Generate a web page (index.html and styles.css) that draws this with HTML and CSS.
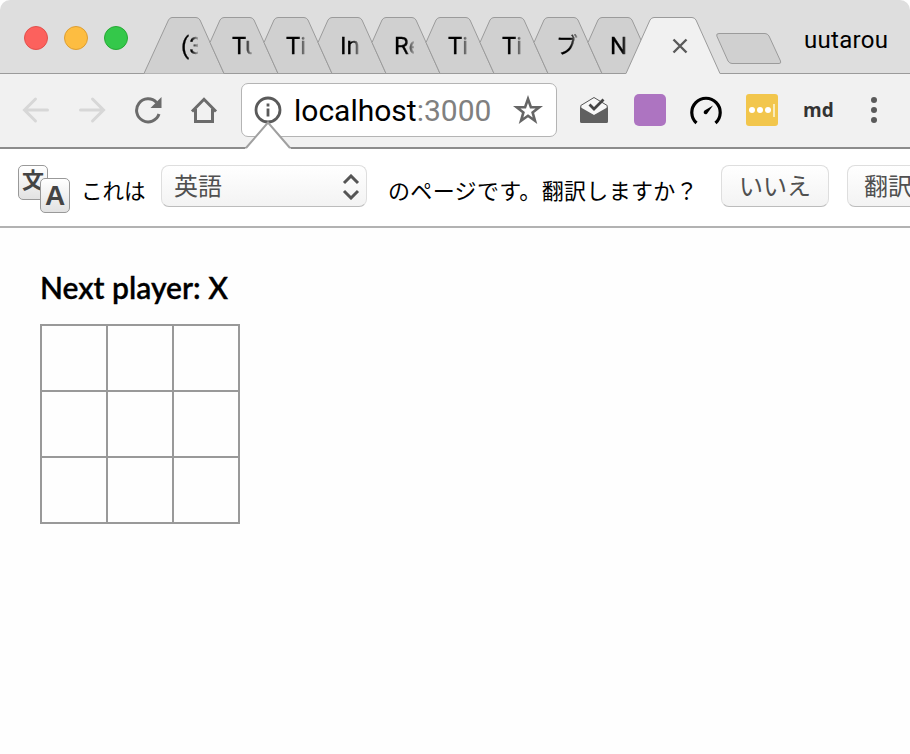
FILE: index.html
```html
<!DOCTYPE html>
<html lang="ja">
<head>
  <meta charset="utf-8">
  <title>localhost:3000</title>
  <link rel="stylesheet" href="styles.css">
</head>
<body>
<div class="window">
  <div class="tab-strip">
    <div class="lights">
      <span class="light red"></span>
      <span class="light yellow"></span>
      <span class="light green"></span>
    </div>
    <div class="tabs">
      <div class="tab first">
        <svg class="shape" width="82" height="58"><path d="M0 57.5 24.5 4Q26 1.5 28 1.5H52Q54.500 1.500 56 4L80 57.500"/></svg>
        <span class="title">(3)</span>
      </div>
      <div class="tab">
        <svg class="shape" width="82" height="58"><path d="M12 26.500 22 4Q23.500 1.500 26 1.500H52Q54.500 1.500 56 4L80 57.500H26Z"/></svg>
        <span class="title">Tu</span>
      </div>
      <div class="tab">
        <svg class="shape" width="82" height="58"><path d="M12 26.500 22 4Q23.500 1.500 26 1.500H52Q54.500 1.500 56 4L80 57.500H26Z"/></svg>
        <span class="title">Ti</span>
      </div>
      <div class="tab">
        <svg class="shape" width="82" height="58"><path d="M12 26.500 22 4Q23.500 1.500 26 1.500H52Q54.500 1.500 56 4L80 57.500H26Z"/></svg>
        <span class="title">In</span>
      </div>
      <div class="tab">
        <svg class="shape" width="82" height="58"><path d="M12 26.500 22 4Q23.500 1.500 26 1.500H52Q54.500 1.500 56 4L80 57.500H26Z"/></svg>
        <span class="title">Re</span>
      </div>
      <div class="tab">
        <svg class="shape" width="82" height="58"><path d="M12 26.500 22 4Q23.500 1.500 26 1.500H52Q54.500 1.500 56 4L80 57.500H26Z"/></svg>
        <span class="title">Ti</span>
      </div>
      <div class="tab">
        <svg class="shape" width="82" height="58"><path d="M12 26.500 22 4Q23.500 1.500 26 1.500H52Q54.500 1.500 56 4L80 57.500H26Z"/></svg>
        <span class="title">Ti</span>
      </div>
      <div class="tab">
        <svg class="shape" width="82" height="58"><path d="M12 26.500 22 4Q23.500 1.500 26 1.500H52Q54.500 1.500 56 4L80 57.500H26Z"/></svg>
        <span class="title wide">ブ</span>
      </div>
      <div class="tab">
        <svg class="shape" width="82" height="58"><path d="M12 26.500 22 4Q23.500 1.500 26 1.500H52Q54.500 1.500 56 4L80 57.500H26Z"/></svg>
        <span class="title">N</span>
      </div>
      <div class="tab active">
        <svg class="shape" width="98" height="58"><path d="M0 58 1 57.500 25 4Q26.500 1.500 29 1.500H67Q69.500 1.500 71 4L95 57.500 96 58"/></svg>
        <svg class="close" width="16" height="16"><path d="M1.500 1.500 14.500 14.500M14.500 1.500 1.500 14.500"/></svg>
      </div>
    </div>
    <svg class="new-tab" width="66" height="32"><path d="M3 .5H49Q51.500 .5 53 3L64.500 28Q65.500 30.500 63 30.500H16Q13.500 30.500 12 28L.8 3Q0 .5 3 .5Z"/></svg>
    <span class="user">uutarou</span>
  </div>

  <div class="toolbar">
    <div class="nav">
      <svg class="nav-icon off" width="28" height="28"><path d="M25.500 14H3.500M13.500 3 2.500 14 13.500 25"/></svg>
      <svg class="nav-icon off" width="28" height="28"><path d="M2.500 14H24.500M14.500 3 25.500 14 14.500 25"/></svg>
      <svg class="nav-icon" width="28" height="28"><path d="M22.500 6.500A11.500 11.500 0 1 0 25 18"/><path class="solid" d="M27.500 1V12H16.500Z"/></svg>
      <svg class="nav-icon" width="28" height="28"><path d="M2 15.500 14 3.300 26 15.500"/><path d="M5.500 13V25.500H22.500V13"/></svg>
    </div>
    <div class="omnibox">
      <svg class="info" width="28" height="28"><circle cx="14" cy="14" r="12"/><path d="M14 7.500v3M14 12.500v8"/></svg>
      <span class="url">localhost<span class="port">:3000</span></span>
      <svg class="star" width="30" height="30"><path d="M15 4 17.900 12.200H26.300L19.600 17.400 22 25.800 15 20.800 8 25.800 10.400 17.400 3.700 12.200H12.100Z"/></svg>
    </div>
    <div class="extensions">
      <svg width="28" height="28"><path d="M.8 9.500 14 1.500 27.200 9.500V13L14 20 .8 13Z" fill="#f7f7f7" stroke="#555"/><path d="M0 11 14 19 28 11V25.500Q28 27 26.500 27H1.500Q0 27 0 25.500Z" fill="#606060"/><path d="M9.500 8.500 14 13 23.500 3.500" fill="none" stroke="#444" stroke-width="2.800"/></svg>
      <span class="purple"></span>
      <svg width="32" height="30"><path d="M6.500 28A14.200 14.200 0 1 1 25.500 28" fill="none" stroke="#000" stroke-width="3.200"/><path d="M23 10.500 17 18.700Q15.500 20 14 18.500 13 17 14.500 15.500Z"/></svg>
      <span class="password"><i></i><i></i><i></i><b></b></span>
      <span class="md">md</span>
      <span class="menu"><i></i><i></i><i></i></span>
    </div>
  </div>

  <div class="infobar">
    <svg class="arrow" width="46" height="29"><path d="M0 28 23 1 46 28V29H0Z" fill="#fff"/><path d="M1 27 23 1.500 45 27" fill="none" stroke="#a0a0a0" stroke-width="2"/></svg>
    <div class="translate">
      <span class="card">文</span>
      <span class="card front">A</span>
    </div>
    <span class="label">これは</span>
    <div class="button select">英語<svg width="18" height="26"><path d="M2 9 9 2 16 9M2 17 9 24 16 17"/></svg></div>
    <span class="label question">のページです。翻訳しますか？</span>
    <div class="button no">いいえ</div>
    <div class="button yes">翻訳</div>
  </div>

  <div class="game">
    <div class="status">Next player: X</div>
    <div class="board">
      <div class="square"></div><div class="square"></div><div class="square"></div>
      <div class="square"></div><div class="square"></div><div class="square"></div>
      <div class="square"></div><div class="square"></div><div class="square"></div>
    </div>
  </div>
</div>
</body>
</html>
```
FILE: styles.css
```css
* {
  box-sizing: border-box;
}
body {
  margin: 0;
  background: #fff;
  font-family: Roboto, "Noto Sans CJK JP", sans-serif;
  overflow: hidden;
}
svg {
  display: block;
  flex: none;
}
.window {
  width: 910px;
  height: 754px;
  background: #fefefe;
  overflow: hidden;
}

/* tabs */
.tab-strip {
  display: flex;
  height: 74px;
  background: #dedede;
  border-bottom: 1px solid #9b9b9b;
  border-radius: 10px 10px 0 0;
}
.lights {
  display: flex;
  gap: 16px;
  width: 144px;
  padding: 26px 0 0 24px;
}
.light {
  width: 24px;
  height: 24px;
  border-radius: 50%;
  border: 1px solid;
}
.red {
  background: #fc615d;
  border-color: #e2504c;
}
.yellow {
  background: #fdbd41;
  border-color: #dd9e33;
}
.green {
  background: #34c84a;
  border-color: #26a934;
}
.tabs {
  display: flex;
  padding-top: 16px;
}
.tab {
  position: relative;
  width: 54px;
  height: 58px;
}
.shape {
  position: absolute;
  left: 0;
  top: 0;
  fill: #d0d0d0;
  stroke: #9b9b9b;
}
.title {
  position: relative;
  display: block;
  margin-left: 34px;
  width: 20px;
  overflow: hidden;
  white-space: nowrap;
  font-size: 24px;
  line-height: 60px;
  height: 58px;
  -webkit-text-stroke: .3px;
  -webkit-mask-image: linear-gradient(90deg, #000 60%, rgba(0, 0, 0, .2));
  mask-image: linear-gradient(90deg, #000 60%, rgba(0, 0, 0, .2));
}
.first .title {
  margin-left: 37px;
  width: 17px;
}
.title.wide {
  width: 23px;
  font-size: 22px;
}
.active {
  width: 87px;
  margin-left: -5px;
}
.active .shape {
  width: 99px;
  fill: #f1f1f1;
}
.close {
  position: relative;
  margin: 22px 0 0 47px;
  fill: none;
  stroke: #5a5a5a;
  stroke-width: 2.4;
}
.new-tab {
  margin: 33px 0 0 4px;
  fill: #d0d0d0;
  stroke: #9b9b9b;
}
.user {
  margin: 25px 0 0 22px;
  font-size: 24px;
  line-height: 30px;
  letter-spacing: .3px;
}

/* toolbar */
.toolbar {
  display: flex;
  height: 75px;
  background: #f1f1f1;
  border-bottom: 2px solid #8c8c8c;
}
.nav {
  display: flex;
  gap: 28px;
  width: 241px;
  padding: 22px 0 0 22px;
}
.nav-icon {
  fill: none;
  stroke: #6b6b6b;
  stroke-width: 3;
}
.nav-icon.off {
  stroke: #d7d7d7;
  stroke-linecap: round;
}
.solid {
  fill: #6b6b6b;
  stroke: none;
}
.omnibox {
  display: flex;
  align-items: center;
  width: 316px;
  height: 54px;
  margin-top: 9px;
  padding-left: 12px;
  background: #fff;
  border: 1px solid #b4b4b4;
  border-radius: 7px;
}
.info {
  fill: none;
  stroke: #5a5a5a;
  stroke-width: 2.8;
}
.url {
  width: 231px;
  padding-left: 12px;
  font-size: 30px;
  white-space: nowrap;
}
.port {
  color: #808080;
}
.star {
  fill: none;
  stroke: #666;
  stroke-width: 2.6;
}
.extensions {
  display: flex;
  align-items: center;
  height: 72px;
  padding-left: 23px;
}
.purple {
  width: 32px;
  height: 32px;
  margin: 0 24px 0 26px;
  border-radius: 5px;
  background: #ad74c1;
}
.password {
  display: flex;
  align-items: center;
  gap: 2px;
  width: 32px;
  height: 32px;
  margin-left: 24px;
  padding-left: 3px;
  border-radius: 3px;
  background: #f2c64c;
}
.password i {
  width: 6px;
  height: 6px;
  border-radius: 50%;
  background: #fff;
}
.password b {
  width: 2px;
  height: 13px;
  background: #faebb8;
}
.md {
  width: 66px;
  padding-left: 25px;
  font: bold 19px "Open Sans", sans-serif;
  color: #333;
}
.menu {
  display: flex;
  flex-direction: column;
  gap: 4px;
  margin-left: 27px;
}
.menu i {
  width: 6px;
  height: 6px;
  border-radius: 50%;
  background: #5a5a5a;
}

/* translate bar */
.infobar {
  position: relative;
  display: flex;
  height: 79px;
  padding-left: 18px;
  background: #fff;
  border-bottom: 2px solid #b2b2b2;
}
.arrow {
  position: absolute;
  left: 245px;
  top: -28px;
}
.translate {
  position: relative;
  flex: none;
  width: 63px;
  padding-top: 16px;
}
.card {
  display: block;
  width: 30px;
  height: 35px;
  border: 1.5px solid #999;
  border-radius: 5px;
  background: linear-gradient(#fff, #e2e2e2);
  color: #444;
  font-size: 22px;
  font-weight: bold;
  line-height: 30px;
  text-align: center;
}
.card.front {
  position: absolute;
  left: 22px;
  top: 29px;
  font: bold 28px/34px "Liberation Sans", sans-serif;
}
.label {
  flex: none;
  width: 80px;
  font-size: 21.5px;
  line-height: 32px;
  padding-top: 27px;
  white-space: nowrap;
}
.question {
  width: 333px;
  margin-left: 21px;
  font-size: 22px;
  letter-spacing: .33px;
}
.button {
  flex: none;
  height: 42px;
  margin-top: 16px;
  padding-left: 17px;
  border: 1px solid #dedede;
  border-bottom-color: #bcbcbc;
  border-radius: 8px;
  background: linear-gradient(#fff, #f3f3f3);
  color: #505050;
  font-size: 24px;
  line-height: 42px;
  white-space: nowrap;
}
.select {
  display: flex;
  align-items: center;
  justify-content: space-between;
  width: 206px;
  padding: 1px 6px 0 12px;
}
.select svg {
  fill: none;
  stroke: #555;
  stroke-width: 3;
}
.no {
  width: 108px;
}
.yes {
  width: 120px;
  margin-left: 18px;
  padding-left: 16px;
}

/* game */
.game {
  padding: 40px;
}
.status {
  height: 56px;
  font: 600 30px/38px Futura, Lato, sans-serif;
  -webkit-text-stroke: .3px;
  white-space: nowrap;
}
.board {
  display: grid;
  grid-template-columns: repeat(3, 66px);
  width: 200px;
  border: solid #999;
  border-width: 2px 0 0 2px;
}
.square {
  height: 66px;
  border: solid #999;
  border-width: 0 2px 2px 0;
}
```
